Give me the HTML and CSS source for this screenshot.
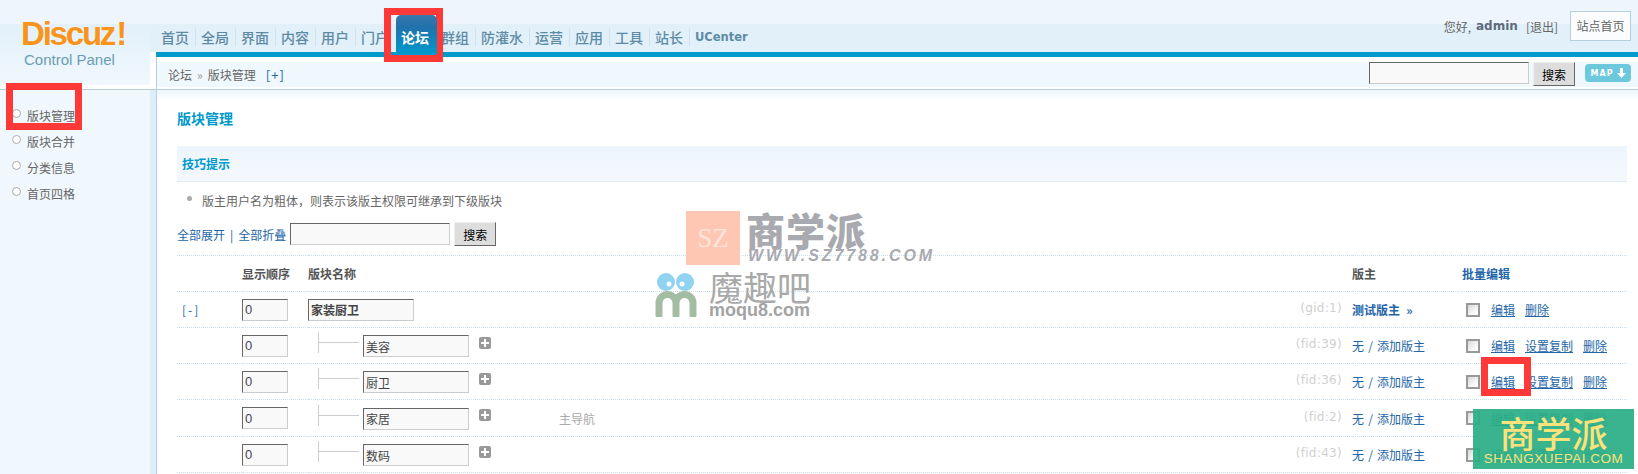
FILE: index.html
```html
<!DOCTYPE html>
<html lang="zh-CN">
<head>
    <meta charset="UTF-8">
    <title>版块管理</title>
    <link rel="stylesheet" href="styles.css">
</head>
<body>
<div class="page">
    <div class="header">
        <div class="logo-box">
            <div class="logo-name">Discuz<span class="logo-bang">!</span></div>
            <div class="logo-sub">Control Panel</div>
        </div>
        <div class="header-main">
            <div class="topbar">
                <ul class="nav">
                    <li>首页</li>
                    <li>全局</li>
                    <li>界面</li>
                    <li>内容</li>
                    <li>用户</li>
                    <li>门户</li>
                    <li class="active">论坛</li>
                    <li>群组</li>
                    <li>防灌水</li>
                    <li>运营</li>
                    <li>应用</li>
                    <li>工具</li>
                    <li>站长</li>
                    <li class="nav-latin">UCenter</li>
                </ul>
                <div class="user">
                    <span class="hello">您好,</span><b>admin</b>
                    <span class="logout">[退出]</span>
                    <span class="home-link">站点首页</span>
                </div>
            </div>
            <div class="crumb">
                <div class="crumb-path">论坛<span class="crumb-sep">»</span>版块管理<span class="crumb-add">[+]</span></div>
                <div class="crumb-search">
                    <input class="txt txt-search" type="text">
                    <button class="btn" type="button">搜索</button>
                    <span class="map-btn">MAP
                        <svg width="9" height="10" viewBox="0 0 9 10"><path d="M3 0h3v5h3L4.5 10 0 5h3z" fill="#fff"/></svg>
                    </span>
                </div>
            </div>
        </div>
    </div>

    <div class="content">
        <ul class="side">
            <li>版块管理</li>
            <li>版块合并</li>
            <li>分类信息</li>
            <li>首页四格</li>
        </ul>
        <div class="main">
            <h3 class="title">版块管理</h3>
            <div class="tip-head">技巧提示</div>
            <ul class="tips">
                <li>版主用户名为粗体，则表示该版主权限可继承到下级版块</li>
            </ul>
            <div class="tools">
                <a>全部展开</a><span class="tools-sep">|</span><a>全部折叠</a>
                <input class="txt txt-search" type="text">
                <button class="btn" type="button">搜索</button>
            </div>

            <table class="forums">
                <colgroup>
                    <col class="c-toggle">
                    <col class="c-order">
                    <col>
                    <col class="c-mod">
                    <col class="c-ops">
                </colgroup>
                <tr class="head">
                    <td></td>
                    <td>显示顺序</td>
                    <td>版块名称</td>
                    <td>版主</td>
                    <td class="batch">批量编辑</td>
                </tr>
                <tr>
                    <td class="toggle">[-]</td>
                    <td><input class="txt txt-order" type="text" value="0"></td>
                    <td><input class="txt txt-name txt-bold" type="text" value="家装厨卫"></td>
                    <td><div class="mod"><span class="fid">(gid:1)</span><a class="mod-bold">测试版主 <span class="more">»</span></a></div></td>
                    <td><div class="ops"><input class="check" type="checkbox"><a>编辑</a><a>删除</a></div></td>
                </tr>
                <tr>
                    <td></td>
                    <td><input class="txt txt-order" type="text" value="0"></td>
                    <td><div class="child"><span class="tree"></span><input class="txt txt-name" type="text" value="美容"><span class="plus"></span></div></td>
                    <td><div class="mod"><span class="fid">(fid:39)</span><a>无 / 添加版主</a></div></td>
                    <td><div class="ops"><input class="check" type="checkbox"><a>编辑</a><a>设置复制</a><a>删除</a></div></td>
                </tr>
                <tr>
                    <td></td>
                    <td><input class="txt txt-order" type="text" value="0"></td>
                    <td><div class="child"><span class="tree"></span><input class="txt txt-name" type="text" value="厨卫"><span class="plus"></span></div></td>
                    <td><div class="mod"><span class="fid">(fid:36)</span><a>无 / 添加版主</a></div></td>
                    <td><div class="ops"><input class="check" type="checkbox"><a>编辑</a><a>设置复制</a><a>删除</a></div></td>
                </tr>
                <tr class="tall">
                    <td></td>
                    <td><input class="txt txt-order" type="text" value="0"></td>
                    <td><div class="child"><span class="tree"></span><input class="txt txt-name" type="text" value="家居"><span class="plus"></span><span class="note">主导航</span></div></td>
                    <td><div class="mod"><span class="fid">(fid:2)</span><a>无 / 添加版主</a></div></td>
                    <td><div class="ops"><input class="check" type="checkbox"><a>编辑</a><a>设置复制</a><a>删除</a></div></td>
                </tr>
                <tr>
                    <td></td>
                    <td><input class="txt txt-order" type="text" value="0"></td>
                    <td><div class="child"><span class="tree"></span><input class="txt txt-name" type="text" value="数码"><span class="plus"></span></div></td>
                    <td><div class="mod"><span class="fid">(fid:43)</span><a>无 / 添加版主</a></div></td>
                    <td><div class="ops"><input class="check" type="checkbox"><a>编辑</a><a>设置复制</a><a>删除</a></div></td>
                </tr>
            </table>
        </div>
    </div>

    <!-- annotations and watermarks lying over the screenshot -->
    <div class="mark mark-nav"></div>
    <div class="mark mark-side"></div>
    <div class="mark mark-edit"></div>

    <div class="wm-sz">
        <div class="wm-sz-box">SZ</div>
        <div class="wm-sz-name">商学派</div>
        <div class="wm-sz-url">WWW.SZ7788.COM</div>
    </div>

    <div class="wm-moqu">
        <svg class="wm-moqu-icon" width="42" height="44" viewBox="0 0 42 44">
            <circle cx="11" cy="9" r="9" fill="#8fd3f1"/>
            <circle cx="30" cy="9" r="9" fill="#8fd3f1"/>
            <circle cx="14" cy="11" r="2.5" fill="#fff"/>
            <circle cx="27" cy="11" r="2.5" fill="#fff"/>
            <path d="M4 42V30a8 8 0 0 1 17 0v12M21 30a8 8 0 0 1 17 0v12" fill="none" stroke="#a3bda3" stroke-width="7" stroke-linecap="round"/>
        </svg>
        <div class="wm-moqu-name">魔趣吧</div>
        <div class="wm-moqu-url">moqu8.com</div>
    </div>

    <div class="wm-green">
        <div class="wm-green-name">商学派</div>
        <div class="wm-green-url">SHANGXUEPAI.COM</div>
    </div>
</div>
</body>
</html>
```

FILE: styles.css
```css
* {
    box-sizing: border-box;
}

html, body {
    margin: 0;
    padding: 0;
    height: 100%;
    overflow: hidden;
}

body {
    font-family: "Noto Sans CJK SC", "Liberation Sans", sans-serif;
    font-size: 12px;
    color: #666;
    background: #fff;
}

ul {
    list-style: none;
    margin: 0;
    padding: 0;
}

a {
    color: #2366a8;
}

.page {
    position: relative;
    width: 1638px;
    height: 474px;
    overflow: hidden;
}

/* header */

.header {
    display: flex;
    height: 90px;
    border-bottom: 1px solid #b5cfdd;
    background: linear-gradient(#eef5fc 0, #eef5fc 24px, #e2f0fa 24px, #e2f0fa 52px, #fff 52px);
}

.logo-box {
    width: 150px;
    height: 85px;
    margin-right: 6px;
    padding: 17px 0 0 21px;
    background: linear-gradient(#eef5fc 0, #eef5fc 24px, #e2f0fa 24px, #f0f8fd 85px);
}

.logo-name {
    font-family: "Liberation Sans", sans-serif;
    font-size: 33px;
    font-weight: bold;
    line-height: 34px;
    letter-spacing: -2.2px;
    color: #f7941d;
    text-shadow: 0 0 1px #fff;
}

.logo-bang {
    margin-left: 2px;
}

.logo-sub {
    font-family: "Liberation Sans", sans-serif;
    font-size: 15px;
    line-height: 16px;
    margin: 1px 0 0 3px;
    color: #6a9cb5;
}

.header-main {
    flex: 1;
    min-width: 0;
}

.topbar {
    display: flex;
    justify-content: space-between;
    height: 57px;
    border-bottom: 5px solid #0099cc;
}

.nav {
    display: flex;
    padding-top: 26px;
    height: 52px;
}

.nav li {
    height: 22px;
    padding: 0 6px;
    font-size: 14px;
    line-height: 22px;
    color: #5d8ba5;
    font-weight: 500;
    position: relative;
}

.nav li:first-child {
    margin-left: -1px;
}

.nav li + li::before {
    content: "";
    position: absolute;
    left: 0;
    top: 2px;
    height: 18px;
    border-left: 1px solid #d0e2ee;
}

.nav .active {
    width: 41px;
    height: 39px;
    margin: -11px -2px 0 1px;
    padding: 11px 0 0 5px;
    border-radius: 5px 5px 0 0;
    background: linear-gradient(#3b78ae, #2171ac 30%, #0099cc);
    color: #fff;
    font-weight: bold;
    z-index: 1;
}

.nav .active::before,
.nav .active + li::before {
    display: none;
}

.nav .nav-latin {
    font-family: "DejaVu Sans", sans-serif;
    font-weight: bold;
    font-size: 11.5px;
}

.user {
    display: flex;
    align-items: center;
    height: 30px;
    margin: 11px 7px 0 0;
    color: #666;
}

.hello {
    margin-right: 5px;
}

.user b {
    font-family: "DejaVu Sans", sans-serif;
    color: #5f6b7a;
}

.logout {
    margin-left: 8px;
}

.home-link {
    width: 61px;
    height: 30px;
    margin-left: 12px;
    border: 1px solid #b5cfdd;
    background: #fafcfd;
    text-align: center;
    line-height: 28px;
}

.crumb {
    display: flex;
    justify-content: space-between;
    height: 32px;
    padding-top: 5px;
    border-left: 1px solid #b5cfdd;
    background: linear-gradient(#fff 5px, #eff8fc 5px, #eff8fc 30px, #fff 30px);
}

.crumb-path {
    padding-left: 11px;
    line-height: 25px;
}

.crumb-sep {
    margin: 0 5px;
    color: #999;
}

.crumb-add {
    margin-left: 10px;
    font-size: 13px;
    letter-spacing: 1px;
    color: #2366a8;
}

.crumb-search {
    display: flex;
    align-items: flex-start;
    gap: 4px;
    padding-right: 7px;
}

.map-btn {
    display: flex;
    align-items: center;
    justify-content: center;
    gap: 3px;
    width: 46px;
    height: 18px;
    margin: 2px 0 0 6px;
    border-radius: 4px;
    background: #6cc8dc;
    color: #fff;
    font-family: "DejaVu Sans", sans-serif;
    font-size: 8px;
    font-weight: bold;
    letter-spacing: 1px;
}

/* form controls */

.txt {
    height: 22px;
    padding: 0 2px;
    border: 1px solid;
    border-color: #666 #ccc #ccc #666;
    background: #f9f9f9;
    font-family: inherit;
    font-size: 12px;
    color: #444;
    outline: none;
}

.txt-search {
    width: 160px;
}

.txt-order {
    width: 46px;
    font-family: "Liberation Sans", sans-serif;
    font-size: 13px;
    color: #445;
}

.txt-name {
    width: 106px;
}

.txt-bold {
    font-weight: bold;
}

.btn {
    width: 42px;
    height: 24px;
    padding: 0;
    border: 1px solid;
    border-color: #eee #666 #666 #eee;
    background: #ddd;
    font-family: inherit;
    font-size: 12px;
    color: #000;
}

/* sidebar */

.content {
    display: flex;
    height: 384px;
}

.side {
    width: 157px;
    flex: none;
    padding: 13px 0 0 27px;
    background: #f0f8fd;
    border-right: 1px solid #b5cfdd;
    box-shadow: inset -6px 0 0 #deeef9;
}

.side li {
    position: relative;
    height: 26px;
    line-height: 26px;
}

.side li::before {
    content: "";
    position: absolute;
    left: -15px;
    top: 6px;
    width: 7px;
    height: 7px;
    border: 1px solid #aaa;
    border-radius: 50%;
    background: #fff;
}

/* main column */

.main {
    flex: 1;
    padding: 0 11px 0 20px;
    background: linear-gradient(#edf5fb, #fff 10px);
}

.title {
    margin: 0;
    padding-top: 18px;
    height: 56px;
    font-size: 14px;
    line-height: 20px;
    font-weight: bold;
    color: #0099cc;
}

.tip-head {
    height: 36px;
    padding-left: 5px;
    line-height: 36px;
    font-weight: bold;
    color: #0099cc;
    background: linear-gradient(#edf5fc, #f4f8fd);
    border-bottom: 1px dotted #d3e3ef;
}

.tips {
    padding: 8px 0 0 25px;
    height: 36px;
}

.tips li {
    position: relative;
    line-height: 22px;
}

.tips li::before {
    content: "";
    position: absolute;
    left: -15px;
    top: 6px;
    width: 5px;
    height: 5px;
    border-radius: 50%;
    background: #aaa;
}

.tools {
    display: flex;
    align-items: center;
    height: 37px;
    padding-bottom: 5px;
}

.tools a {
    color: #2366a8;
}

.tools-sep {
    margin: 0 5px;
    color: #2366a8;
}

.tools .txt {
    margin-left: 4px;
}

.tools .btn {
    margin-left: 4px;
}

.forums {
    width: 1450px;
    table-layout: fixed;
    border-collapse: collapse;
}

.c-toggle {
    width: 65px;
}

.c-order {
    width: 66px;
}

.c-mod {
    width: 110px;
}

.c-ops {
    width: 165px;
}

.forums td {
    height: 36px;
    padding: 0;
    border-top: 1px dotted #c9e2f2;
    vertical-align: middle;
}

.forums tr:last-child td {
    border-bottom: 1px dotted #c9e2f2;
}

.forums .tall td {
    height: 37px;
}

.head td {
    font-weight: bold;
    color: #555;
}

.forums .batch {
    color: #2366a8;
}

.forums .toggle {
    padding-left: 5px;
    letter-spacing: 2px;
    color: #2366a8;
}

.child {
    display: flex;
    align-items: center;
    position: relative;
    padding-left: 55px;
}

.child .txt {
    margin-top: 1px;
}

.tree {
    position: absolute;
    left: 10px;
    top: -2px;
    width: 40px;
    height: 21px;
    border-left: 1px solid #ccc;
}

.tree::after {
    content: "";
    position: absolute;
    left: 0;
    top: 10px;
    width: 40px;
    border-top: 1px solid #ccc;
}

.plus {
    position: relative;
    width: 12px;
    height: 12px;
    margin: -6px 0 0 10px;
    border-radius: 2px;
    background: #999;
}

.plus::before,
.plus::after {
    content: "";
    position: absolute;
    background: #fff;
}

.plus::before {
    left: 2px;
    top: 5px;
    width: 8px;
    height: 2px;
}

.plus::after {
    left: 5px;
    top: 2px;
    width: 2px;
    height: 8px;
}

.note {
    margin-left: 68px;
    color: #aaa;
}

.mod {
    position: relative;
}

.fid {
    position: absolute;
    right: calc(100% + 10px);
    white-space: nowrap;
    font-family: "DejaVu Sans", sans-serif;
    letter-spacing: 0.3px;
    color: #d0d0d0;
}

.mod a {
    word-spacing: 1.5px;
    color: #2366a8;
}

.mod-bold {
    font-weight: bold;
}

.more {
    margin-left: 2px;
}

.ops {
    display: flex;
    align-items: center;
    padding-left: 4px;
}

.ops a {
    margin-right: 10px;
    text-decoration: underline;
}

.check {
    appearance: none;
    width: 14px;
    height: 14px;
    margin: 0 11px 0 0;
    border: 2px solid #999;
    background: linear-gradient(135deg, #d8d8d8, #fff 80%);
}

/* overlays */

.mark {
    position: absolute;
    border: 7px solid #ff3838;
}

.mark-nav {
    left: 384px;
    top: 8px;
    width: 59px;
    height: 54px;
}

.mark-side {
    left: 6px;
    top: 83px;
    width: 76px;
    height: 47px;
}

.mark-edit {
    left: 1481px;
    top: 357px;
    width: 50px;
    height: 39px;
}

.wm-sz {
    position: absolute;
    left: 686px;
    top: 211px;
    width: 260px;
    height: 54px;
}

.wm-sz-box {
    width: 54px;
    height: 54px;
    background: #fdc7b4;
    color: #ffe4da;
    font-family: "Liberation Serif", serif;
    font-size: 27px;
    line-height: 54px;
    text-align: center;
}

.wm-sz-name {
    position: absolute;
    left: 60px;
    top: -1px;
    font-size: 39px;
    font-weight: 900;
    line-height: 38px;
    letter-spacing: 1px;
    color: #a9a9b0;
}

.wm-sz-url {
    position: absolute;
    left: 62px;
    top: 36px;
    font-family: "Liberation Sans", sans-serif;
    font-size: 16px;
    font-weight: bold;
    font-style: italic;
    line-height: 18px;
    letter-spacing: 2.9px;
    color: #a9a9b0;
}

.wm-moqu {
    position: absolute;
    left: 655px;
    top: 273px;
    width: 170px;
    height: 48px;
}

.wm-moqu-icon {
    display: block;
}

.wm-moqu-name {
    position: absolute;
    left: 54px;
    top: -4px;
    font-family: "Noto Sans CJK SC", serif;
    font-size: 34px;
    line-height: 36px;
    color: #a9a9a9;
}

.wm-moqu-url {
    position: absolute;
    left: 54px;
    top: 28px;
    font-family: "Liberation Sans", sans-serif;
    font-size: 18px;
    font-weight: bold;
    line-height: 18px;
    color: #a3a3a3;
}

.wm-green {
    position: absolute;
    left: 1473px;
    top: 409px;
    width: 161px;
    height: 60px;
    padding-top: 6px;
    background: rgba(43, 174, 133, 0.93);
    text-align: center;
}

.wm-green-name {
    font-size: 36px;
    font-weight: 500;
    line-height: 34px;
    color: #fbe27a;
}

.wm-green-url {
    margin-top: 2px;
    font-family: "Liberation Sans", sans-serif;
    font-size: 13.5px;
    line-height: 16px;
    letter-spacing: 0.5px;
    color: #fbe27a;
}
```
